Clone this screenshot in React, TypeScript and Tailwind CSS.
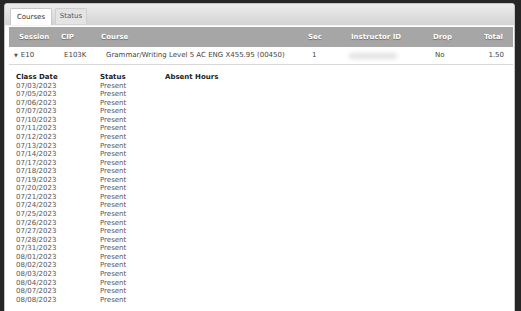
import React from 'react';

const dates = [
  '07/03/2023', '07/05/2023', '07/06/2023', '07/07/2023', '07/10/2023', '07/11/2023',
  '07/12/2023', '07/13/2023', '07/14/2023', '07/17/2023', '07/18/2023', '07/19/2023',
  '07/20/2023', '07/21/2023', '07/24/2023', '07/25/2023', '07/26/2023', '07/27/2023',
  '07/28/2023', '07/31/2023', '08/01/2023', '08/02/2023', '08/03/2023', '08/04/2023',
  '08/07/2023', '08/08/2023',
];

const App: React.FC = () => {
  return (
    <div
      className="w-[521px] h-[311px] overflow-hidden bg-[#262626] pt-[3px] pl-[4px] pr-[6px]"
      style={{ fontFamily: '"DejaVu Sans", Verdana, sans-serif' }}
    >
      <div className="h-[320px] bg-white border border-[#c4c4c4] rounded-t-[3px] flex flex-col">
        {/* Tab bar */}
        <div className="h-[22px] shrink-0 bg-gradient-to-b from-[#ececec] to-[#d4d4d4] rounded-t-[3px] border-b border-[#f4f4f4] flex items-end pl-[5px] gap-[3px]">
          <div className="h-[17px] w-[42px] bg-white border border-b-0 border-[#c8c8c8] rounded-t-[2px] flex items-center justify-center text-[7px] text-[#333]">
            Courses
          </div>
          <div className="h-[16px] w-[32px] bg-[#e4e4e4] border border-b-0 border-[#cfcfcf] rounded-t-[2px] flex items-center justify-center text-[7px] text-[#555] mb-[1px]">
            Status
          </div>
        </div>

        <div className="pl-[4px] pr-[1px] pt-[1px]">
          {/* Header row */}
          <div className="h-[20px] bg-[#a6a6a6] flex items-center text-[7px] font-bold text-white [text-shadow:0_1px_1px_rgba(0,0,0,0.35)]">
            <div className="w-[48px] pl-[10px]">Session</div>
            <div className="w-[41px] pl-[4px]">CIP</div>
            <div className="w-[201px] pl-[3px]">Course</div>
            <div className="w-[40px] pl-[9px]">Sec</div>
            <div className="w-[85px] pl-[12px]">Instructor ID</div>
            <div className="w-[45px] pl-[9px]">Drop</div>
            <div className="flex-1 text-right pr-[10px]">Total</div>
          </div>

          {/* Data row */}
          <div className="h-[18px] flex items-center text-[7px] text-[#444] border-b border-[#d8d8d8]">
            <div className="w-[48px] pl-[5px] flex items-center">
              <span className="text-[5px] text-[#555] mr-[3px]">▼</span>
              <span>E10</span>
            </div>
            <div className="w-[41px] pl-[7px]">E103K</div>
            <div className="w-[201px] pl-[8px] whitespace-nowrap">Grammar/Writing Level 5 AC ENG X455.95 (00450)</div>
            <div className="w-[40px] pl-[13px]">1</div>
            <div className="w-[85px] pl-[10px] flex items-center">
              <div className="w-[48px] h-[6px] rounded-full bg-[#e2e2e2] blur-[2px]" />
            </div>
            <div className="w-[45px] pl-[11px]">No</div>
            <div className="flex-1 text-right pr-[9px]">1.50</div>
          </div>

          {/* Attendance */}
          <div className="pl-[7px] pt-[8px] text-[7px] leading-[8.56px]">
            <div className="flex font-bold text-[#222]">
              <div className="w-[84px]">Class Date</div>
              <div className="w-[65px]">Status</div>
              <div>Absent Hours</div>
            </div>
            {dates.map((d) => (
              <div key={d} className="flex text-[#555]">
                <div className="w-[84px]">{d}</div>
                <div className="w-[65px]">Present</div>
                <div />
              </div>
            ))}
          </div>
        </div>
      </div>
    </div>
  );
};

export default App;
